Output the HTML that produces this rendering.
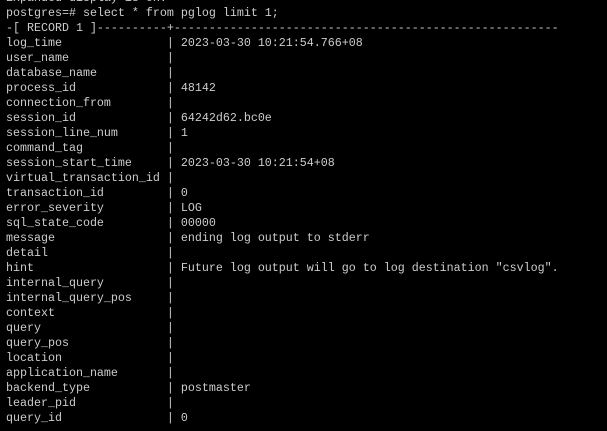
<!DOCTYPE html>
<html><head><meta charset="utf-8"><style>
html,body{margin:0;padding:0;background:#000;width:607px;height:431px;overflow:hidden}
pre{position:absolute;left:6px;top:-9px;margin:0;font-family:"Liberation Mono",monospace;font-size:11.67px;line-height:15px;color:#cccccc}
</style></head><body><pre>Expanded display is on.
postgres=# select * from pglog limit 1;
-[ RECORD 1 ]----------+-------------------------------------------------------
log_time               | 2023-03-30 10:21:54.766+08
user_name              |
database_name          |
process_id             | 48142
connection_from        |
session_id             | 64242d62.bc0e
session_line_num       | 1
command_tag            |
session_start_time     | 2023-03-30 10:21:54+08
virtual_transaction_id |
transaction_id         | 0
error_severity         | LOG
sql_state_code         | 00000
message                | ending log output to stderr
detail                 |
hint                   | Future log output will go to log destination "csvlog".
internal_query         |
internal_query_pos     |
context                |
query                  |
query_pos              |
location               |
application_name       |
backend_type           | postmaster
leader_pid             |
query_id               | 0</pre></body></html>
